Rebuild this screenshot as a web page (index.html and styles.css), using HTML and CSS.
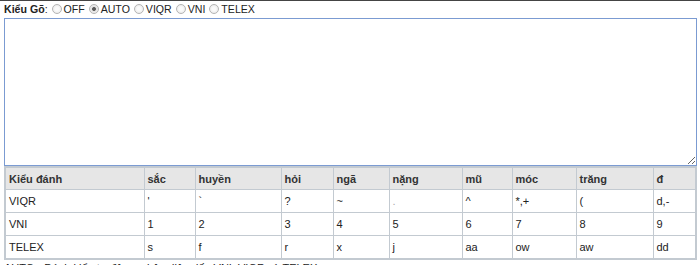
FILE: index.html
```html
<!DOCTYPE html>
<html lang="vi">
<head>
  <meta charset="UTF-8">
  <meta name="viewport" content="width=device-width, initial-scale=1.0">
  <title>Bộ gõ tiếng Việt</title>
  <link rel="stylesheet" href="styles.css">
</head>
<body>
  <div class="modes">
    <b>Kiểu Gõ</b>:
    <label><input type="radio" name="mode" value="off">OFF</label>
    <label><input type="radio" name="mode" value="auto" checked>AUTO</label>
    <label><input type="radio" name="mode" value="viqr">VIQR</label>
    <label><input type="radio" name="mode" value="vni">VNI</label>
    <label><input type="radio" name="mode" value="telex">TELEX</label>
  </div>
  <textarea id="editor" class="editor" autofocus></textarea>
  <table class="keys">
    <colgroup>
      <col class="c1"><col class="c2"><col class="c3"><col class="c4"><col class="c5">
      <col class="c6"><col class="c7"><col class="c8"><col class="c9"><col>
    </colgroup>
    <tr>
      <th>Kiểu đánh</th>
      <th>sắc</th>
      <th>huyền</th>
      <th>hỏi</th>
      <th>ngã</th>
      <th>nặng</th>
      <th>mũ</th>
      <th>móc</th>
      <th>trăng</th>
      <th>đ</th>
    </tr>
    <tr>
      <td>VIQR</td><td>'</td><td>`</td><td>?</td><td>~</td><td class="dim">.</td><td>^</td><td>*,+</td><td>(</td><td>d,-</td>
    </tr>
    <tr>
      <td>VNI</td><td>1</td><td>2</td><td>3</td><td>4</td><td>5</td><td>6</td><td>7</td><td>8</td><td>9</td>
    </tr>
    <tr>
      <td>TELEX</td><td>s</td><td>f</td><td>r</td><td>x</td><td>j</td><td>aa</td><td>ow</td><td>aw</td><td>dd</td>
    </tr>
  </table>
  <p class="note">AUTO - Đánh kiểu tự động, nhận diện dấu VNI, VIQR và TELEX</p>

  <script>
    document.getElementById('editor').focus();
  </script>
</body>
</html>
```
FILE: styles.css
```css
body {
  font-family: "Liberation Sans", Arial, sans-serif;
  font-size: 11px;
  color: #222;
  margin: 0;
  padding: 0 3px 0 4px;
  border-top: 1px solid #444;
  background-color: #fff;
}
.modes {
  height: 16px;
  line-height: 16px;
  font-size: 10.6px;
}
.modes input[type="radio"] {
  appearance: none;
  -webkit-appearance: none;
  width: 10px;
  height: 10px;
  margin: 0 2px 0 1px;
  vertical-align: -1px;
  border: 1px solid #b4b4b4;
  border-radius: 50%;
  background: radial-gradient(circle, #fafafa 30%, #e4e4e4 100%);
  box-sizing: border-box;
}
.modes input[type="radio"]:checked {
  background: radial-gradient(circle, #555 0, #666 30%, #e4e4e4 40%, #f4f4f4 100%);
}
.editor {
  display: block;
  width: 100%;
  height: 148px;
  margin: 1px 0 0;
  padding: 2px;
  box-sizing: border-box;
  border: 1px solid #7b9bd2;
  font-family: "Liberation Sans", Arial, sans-serif;
  font-size: 13px;
  resize: both;
  outline: none;
}
.keys {
  width: 100%;
  table-layout: fixed;
  border-collapse: collapse;
  border: 2px solid #c3cad1;
}
.c1 { width: 139px; }
.c2 { width: 51px; }
.c3 { width: 86px; }
.c4 { width: 52px; }
.c5 { width: 56px; }
.c6 { width: 73px; }
.c7 { width: 50px; }
.c8 { width: 64px; }
.c9 { width: 77px; }
.keys th, .keys td {
  height: 22px;
  padding: 0 3px;
  border: 1px solid #c3cad1;
  text-align: left;
  font-size: 11px;
}
.keys th {
  height: 21px;
  background-color: #e6e6e6;
  font-weight: bold;
  color: #333;
}
.keys td {
  color: #222;
}
.keys .dim {
  color: #aaa;
}
.note {
  margin: 2px 0 0;
  font-size: 11px;
}
```
